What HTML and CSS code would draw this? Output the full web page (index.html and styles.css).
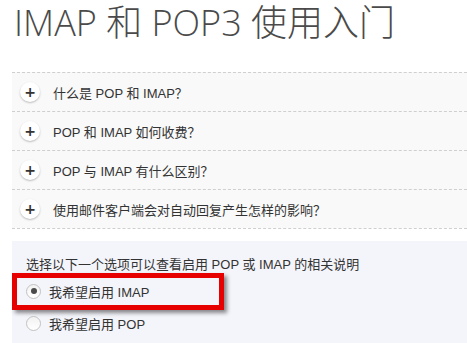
FILE: index.html
```html
<!DOCTYPE html>
<html lang="zh-CN">
<head>
<meta charset="utf-8">
<link rel="stylesheet" href="styles.css">
</head>
<body>
<h1 class="title">IMAP 和 POP3 使用入门</h1>
<div class="faq">
  <div class="row"><span class="plus">+</span><span class="q">什么是 POP 和 IMAP<span class="qm">？</span></span></div>
  <div class="row"><span class="plus">+</span><span class="q">POP 和 IMAP 如何收费<span class="qm">？</span></span></div>
  <div class="row"><span class="plus">+</span><span class="q">POP 与 IMAP 有什么区别<span class="qm">？</span></span></div>
  <div class="row"><span class="plus">+</span><span class="q">使用邮件客户端会对自动回复产生怎样的影响<span class="qm">？</span></span></div>
</div>
<div class="panel">
  <p class="intro">选择以下一个选项可以查看启用 POP 或 IMAP 的相关说明</p>
  <label class="opt first"><span class="radio checked"></span>我希望启用 IMAP<span class="highlight"></span></label>
  <label class="opt"><span class="radio"></span>我希望启用 POP</label>
</div>
</body>
</html>
```
FILE: styles.css
```css
html, body {
  margin: 0;
  padding: 0;
  background: #fff;
}
body {
  width: 467px;
  height: 343px;
  overflow: hidden;
  font-family: "Liberation Sans", "Noto Sans CJK SC", sans-serif;
  font-size: 13px;
  color: #333;
}
.title {
  margin: -3px 0 0 0;
  padding: 0 0 0 14px;
  height: 73px;
  box-sizing: border-box;
  font-family: "Open Sans", "Noto Sans CJK SC", sans-serif;
  font-weight: 300;
  font-size: 36px;
  line-height: 52px;
  color: #4a4a4a;
  white-space: nowrap;
}
.faq {
  margin-left: 12px;
  margin-top: 2px;
  border-bottom: 1px dashed #cfcfcf;
}
.row {
  display: flex;
  align-items: center;
  height: 38px;
  border-top: 1px dashed #cfcfcf;
  background: #f9f9f9;
}
.plus {
  width: 20px;
  height: 20px;
  margin-left: 8px;
  margin-right: 13px;
  border-radius: 50%;
  background: #fff;
  box-shadow: 0 1px 2px rgba(0,0,0,0.25);
  display: flex;
  align-items: center;
  justify-content: center;
  font-family: "DejaVu Sans", sans-serif;
  font-weight: bold;
  font-size: 14px;
  line-height: 1;
  color: #333;
}
.q {
  white-space: nowrap;
}
.qm {
  font-family: "Noto Sans CJK TC", "Noto Sans CJK SC", sans-serif;
}
.panel {
  margin: 12px 0 0 12px;
  padding: 15px 0 20px 14px;
  background: #f4f5fb;
}
.intro {
  margin: 0 0 1px 0;
  line-height: 18px;
}
.opt {
  position: relative;
  display: flex;
  align-items: center;
  height: 32px;
  white-space: nowrap;
  font-size: 13px;
}
.radio {
  width: 15px;
  height: 15px;
  border-radius: 50%;
  border: 1px solid #c2c2c2;
  background: linear-gradient(#f2f2f2, #ffffff);
  margin-right: 8px;
  box-sizing: border-box;
  position: relative;
}
.radio.checked::after {
  content: "";
  position: absolute;
  left: 3.5px;
  top: 3.5px;
  width: 6px;
  height: 6px;
  border-radius: 50%;
  background: #4a4a4a;
}
.highlight {
  position: absolute;
  left: -14px;
  top: -2px;
  width: 212px;
  height: 37px;
  box-sizing: border-box;
  border: 5px solid #e60000;
  box-shadow: 3px 3px 4px rgba(0,0,0,0.45);
}
```
